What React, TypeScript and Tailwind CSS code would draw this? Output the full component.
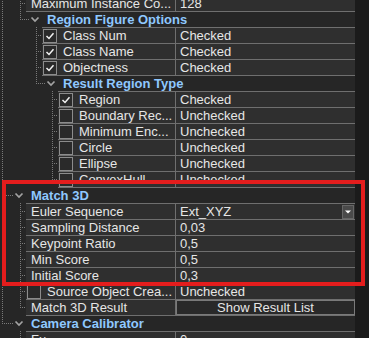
import React from 'react';

type Tree = { full: number[]; half?: number; tick?: [number, number]; chev?: number };

type Row =
  | { k: 'p'; gw: number; tree: Tree; label: string; value?: string; cb?: boolean | null; kind?: 'drop' | 'btn' }
  | { k: 'h'; ts: number; tree: Tree; label: string; line?: 'l26' | 'l42' | 'l58' };

const DOT = '#7a7a7a';

function Gutter({ w, t }: { w: number; t: Tree }) {
  return (
    <svg width={w} height={16} className="block shrink-0">
      {t.full.map((x) => (
        <line key={x} x1={x + 0.5} y1={0} x2={x + 0.5} y2={16} stroke={DOT} strokeDasharray="1 1" />
      ))}
      {t.half !== undefined && (
        <line x1={t.half + 0.5} y1={0} x2={t.half + 0.5} y2={9} stroke={DOT} strokeDasharray="1 1" />
      )}
      {t.tick && (
        <line x1={t.tick[0]} y1={8.5} x2={t.tick[1]} y2={8.5} stroke={DOT} strokeDasharray="1 1" />
      )}
      {t.chev !== undefined && (
        <polyline
          points={`${t.chev + 0.5},6.5 ${t.chev + 4},10 ${t.chev + 7.5},6.5`}
          fill="none"
          stroke="#a3a3a3"
          strokeWidth={1.7}
        />
      )}
    </svg>
  );
}

function Check({ on }: { on: boolean }) {
  return (
    <span className="ml-px flex h-[14px] w-[14px] shrink-0 items-center justify-center border border-[#8c8c8c] bg-[#2a2a2a]">
      {on && (
        <svg width="10" height="10" viewBox="0 0 10 10">
          <path d="M1.5 5 L4 7.5 L8.5 2.2" stroke="#f2f2f2" strokeWidth="1.5" fill="none" />
        </svg>
      )}
    </span>
  );
}

const rows: Row[] = [
  { k: 'p', gw: 26, tree: { full: [2, 20], tick: [20, 26] }, label: 'Maximum Instance Co...', value: '128' },
  { k: 'h', ts: 47, tree: { full: [2], half: 20, tick: [20, 30], chev: 31 }, label: 'Region Figure Options', line: 'l26' },
  { k: 'p', gw: 42, tree: { full: [2, 36], tick: [36, 42] }, cb: true, label: 'Class Num', value: 'Checked' },
  { k: 'p', gw: 42, tree: { full: [2, 36], tick: [36, 42] }, cb: true, label: 'Class Name', value: 'Checked' },
  { k: 'p', gw: 42, tree: { full: [2, 36], tick: [36, 42] }, cb: true, label: 'Objectness', value: 'Checked' },
  { k: 'h', ts: 63, tree: { full: [2], half: 36, tick: [36, 46], chev: 47 }, label: 'Result Region Type', line: 'l42' },
  { k: 'p', gw: 58, tree: { full: [2, 52], tick: [52, 58] }, cb: true, label: 'Region', value: 'Checked' },
  { k: 'p', gw: 58, tree: { full: [2, 52], tick: [52, 58] }, cb: false, label: 'Boundary Rec...', value: 'Unchecked' },
  { k: 'p', gw: 58, tree: { full: [2, 52], tick: [52, 58] }, cb: false, label: 'Minimum Enc...', value: 'Unchecked' },
  { k: 'p', gw: 58, tree: { full: [2, 52], tick: [52, 58] }, cb: false, label: 'Circle', value: 'Unchecked' },
  { k: 'p', gw: 58, tree: { full: [2, 52], tick: [52, 58] }, cb: false, label: 'Ellipse', value: 'Unchecked' },
  { k: 'p', gw: 58, tree: { full: [2], half: 52, tick: [52, 58] }, cb: false, label: 'ConvexHull', value: 'Unchecked' },
  { k: 'h', ts: 31, tree: { full: [2], tick: [2, 14], chev: 15 }, label: 'Match 3D', line: 'l58' },
  { k: 'p', gw: 26, tree: { full: [2, 20], tick: [20, 26] }, label: 'Euler Sequence', value: 'Ext_XYZ', kind: 'drop' },
  { k: 'p', gw: 26, tree: { full: [2, 20], tick: [20, 26] }, label: 'Sampling Distance', value: '0,03' },
  { k: 'p', gw: 26, tree: { full: [2, 20], tick: [20, 26] }, label: 'Keypoint Ratio', value: '0,5' },
  { k: 'p', gw: 26, tree: { full: [2, 20], tick: [20, 26] }, label: 'Min Score', value: '0,5' },
  { k: 'p', gw: 26, tree: { full: [2, 20], tick: [20, 26] }, label: 'Initial Score', value: '0,3' },
  { k: 'p', gw: 26, tree: { full: [2, 20], tick: [20, 26] }, cb: false, label: 'Source Object Crea...', value: 'Unchecked' },
  { k: 'p', gw: 26, tree: { full: [2], half: 20, tick: [20, 26] }, label: 'Match 3D Result', value: 'Show Result List', kind: 'btn' },
  { k: 'h', ts: 31, tree: { full: [], half: 2, tick: [2, 14], chev: 15 }, label: 'Camera Calibrator', line: 'l26' },
  { k: 'p', gw: 26, tree: { full: [20], tick: [20, 26] }, label: 'Fu', value: '0' },
];

const lineCls: Record<string, string> = {
  l26: 'left-[26px]',
  l42: 'left-[42px]',
  l58: 'left-[58px]',
};

function PropRow({ r }: { r: Extract<Row, { k: 'p' }> }) {
  return (
    <div className="flex h-4">
      <Gutter w={r.gw} t={r.tree} />
      <div className="flex min-w-0 flex-1 border-t border-[#6f6f6f] bg-[#2f2f2f]">
        <div className="flex min-w-0 flex-1 items-center">
          {r.cb !== undefined && r.cb !== null && <Check on={r.cb} />}
          <span className={r.cb !== undefined && r.cb !== null ? 'ml-[6px] whitespace-nowrap' : 'ml-[5px] whitespace-nowrap'}>
            {r.label}
          </span>
        </div>
        <div className="flex w-[180px] shrink-0 items-center border-l border-[#6f6f6f]">
          {r.kind === 'btn' ? (
            <div className="flex h-full w-full items-center justify-center border border-[#7a7a7a] bg-[#292929]">
              {r.value}
            </div>
          ) : r.kind === 'drop' ? (
            <div className="flex h-full w-full items-center justify-between pl-[4px]">
              <span>{r.value}</span>
              <span className="mr-px flex h-[14px] w-[12px] items-center justify-center border border-[#666666] bg-[#4a4a4a]">
                <svg width="6" height="4" viewBox="0 0 6 4">
                  <path d="M0 0.5 H6 L3 3.5 Z" fill="#ffffff" />
                </svg>
              </span>
            </div>
          ) : (
            <span className="pl-[4px] whitespace-nowrap">{r.value}</span>
          )}
        </div>
      </div>
    </div>
  );
}

function HeadRow({ r }: { r: Extract<Row, { k: 'h' }> }) {
  return (
    <div className="relative flex h-4 items-center">
      <Gutter w={r.ts} t={r.tree} />
      <span className="whitespace-nowrap font-bold text-[#8fc8ff]">{r.label}</span>
      {r.line && <div className={`absolute top-0 right-0 h-px bg-[#6f6f6f] ${lineCls[r.line]}`} />}
    </div>
  );
}

export default function App() {
  return (
    <div className="relative flex h-[338px] w-[369px] overflow-hidden bg-[#262626] font-['Liberation_Sans',Arial,sans-serif] text-[13px] leading-[15px] text-[#e6e6e6]">
      <div className="-mt-[5px] flex w-[355px] flex-col">
        {rows.map((r, i) => (r.k === 'p' ? <PropRow key={i} r={r} /> : <HeadRow key={i} r={r} />))}
      </div>
      <div className="w-[14px] bg-[#1b1b1b]" />
      <div className="pointer-events-none absolute left-[2px] top-[180px] h-[106px] w-[363px] border-4 border-[#e41d1d]" />
    </div>
  );
}
